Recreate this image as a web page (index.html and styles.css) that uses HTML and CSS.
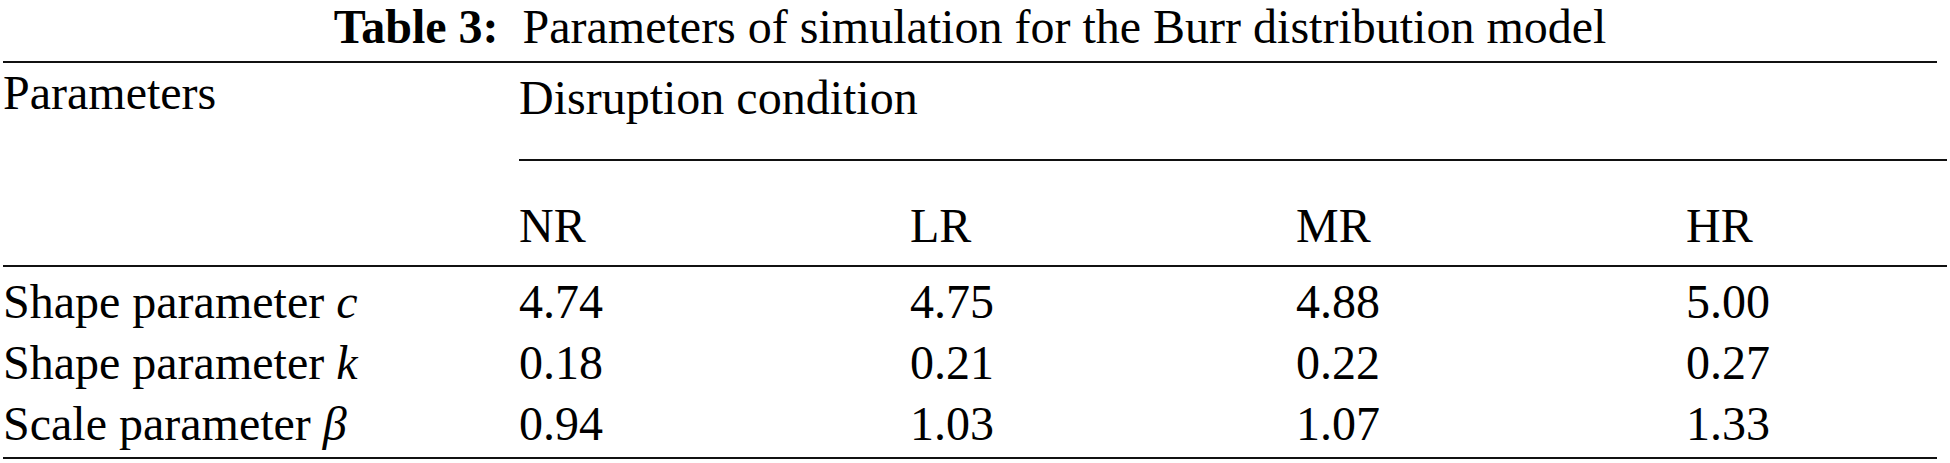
FILE: index.html
```html
<!DOCTYPE html>
<html lang="en">
<head>
  <meta charset="UTF-8" />
  <title>Table 3: Parameters of simulation for the Burr distribution model</title>
  <link rel="stylesheet" href="styles.css">
</head>
<body>
  <div class="page">
    <div class="caption"><b>Table 3:</b>&ensp;Parameters of simulation for the Burr distribution model</div>
    <div class="rule top"></div>

    <table class="params">
      <colgroup>
        <col class="c-label">
        <col class="c-nr">
        <col class="c-lr">
        <col class="c-mr">
        <col class="c-hr">
      </colgroup>
      <thead>
        <tr>
          <th class="head-label" rowspan="2">Parameters</th>
          <th class="group" colspan="4">Disruption condition</th>
        </tr>
        <tr class="sub">
          <th>NR</th>
          <th>LR</th>
          <th>MR</th>
          <th>HR</th>
        </tr>
      </thead>
      <tbody>
        <tr class="first">
          <td>Shape parameter <i>c</i></td>
          <td>4.74</td>
          <td>4.75</td>
          <td>4.88</td>
          <td>5.00</td>
        </tr>
        <tr>
          <td>Shape parameter <i>k</i></td>
          <td>0.18</td>
          <td>0.21</td>
          <td>0.22</td>
          <td>0.27</td>
        </tr>
        <tr class="last">
          <td>Scale parameter <i>&beta;</i></td>
          <td>0.94</td>
          <td>1.03</td>
          <td>1.07</td>
          <td>1.33</td>
        </tr>
      </tbody>
    </table>

    <div class="rule"></div>
  </div>
</body>
</html>
```

FILE: styles.css
```css
/* Basic resets */
* {
  box-sizing: border-box;
  margin: 0;
  padding: 0;
}

body {
  font-family: "Liberation Serif", "Times New Roman", serif;
  font-size: 48px;
  color: #000;
  background: #fff;
}

.page {
  width: 1950px;
  padding: 0 3px;
}

/* Title above the table */
.caption {
  width: 1934px;
  line-height: 54px;
  text-align: center;
  white-space: nowrap;
}

.caption b {
  font-weight: bold;
}

/* Top and bottom rules stop a little short of the inner ones */
.rule {
  width: 1934px;
  height: 2px;
  background: #111;
}

.rule.top {
  margin-top: 7px;
}

/* Table body */
.params {
  width: 1944px;
  table-layout: fixed;
  border-collapse: separate;
  border-spacing: 0;
}

.c-label { width: 516px; }
.c-nr { width: 391px; }
.c-lr { width: 386px; }
.c-mr { width: 390px; }
.c-hr { width: 261px; }

.params th,
.params td {
  padding: 0;
  text-align: left;
  font-weight: normal;
  vertical-align: top;
  white-space: nowrap;
}

.params th {
  line-height: 56px;
}

.head-label {
  padding-top: 2px !important;
  border-bottom: 2px solid #111;
}

.group {
  padding-top: 7px !important;
  padding-bottom: 33px !important;
  border-bottom: 2px solid #111;
}

.sub th {
  padding-top: 37px !important;
  padding-bottom: 11px !important;
  border-bottom: 2px solid #111;
}

.params td {
  line-height: 61px;
}

.first td {
  padding-top: 4px;
}

.last td {
  padding-bottom: 3px;
}
```
